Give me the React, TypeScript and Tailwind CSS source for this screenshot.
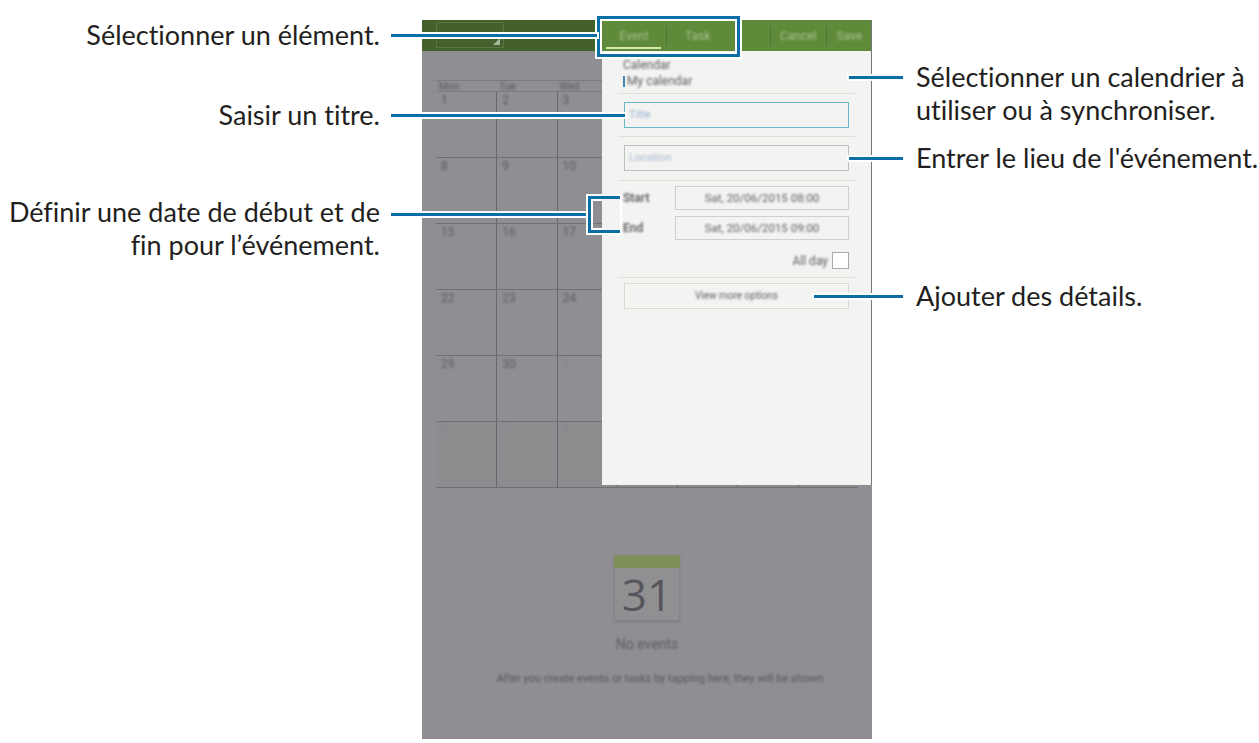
import React from 'react';

const weeks = [
  ['1', '2', '3', '', '', '', ''],
  ['8', '9', '10', '', '', '', ''],
  ['15', '16', '17', '', '', '', ''],
  ['22', '23', '24', '', '', '', ''],
  ['29', '30', '1', '', '', '', ''],
  ['6', '7', '8', '', '', '', ''],
];

// the other day names sit behind the event panel
const days = ['Mon', 'Tue', 'Wed', '', '', '', ''];

const Line = ({ className }: { className: string }) => (
  <div className={`absolute bg-[#0b6ea6] outline-2 outline-white ${className}`} />
);

const CalendarGrid = () => (
  <div className="ml-[14px] mt-[29px] w-[422px]">
    <div className="grid h-[12px] grid-cols-7 border-y border-[#7c7b7f] text-[10px] leading-[11px] text-[#5e5d61]">
      {days.map((d, i) => (
        <div key={i} className="pl-[3px]"><span className="blur-[1.1px] inline-block">{d}</span></div>
      ))}
    </div>
    {weeks.map((week, i) => (
      <div key={i} className={`grid h-[66px] grid-cols-7 border-b border-[#716f74] ${i === 5 ? 'bg-[#8c8d8f]' : ''}`}>
        {week.map((date, j) => (
          <div key={j} className={`pl-[5px] pt-px text-[12px] leading-[14px] ${j > 0 ? 'border-l border-[#68666b]' : ''} ${i >= 4 && (i === 5 || j === 2) ? 'text-[#89888c]' : 'text-[#5f5e62]'}`}>
            <span className="inline-block blur-[1.1px]">{date}</span>
          </div>
        ))}
      </div>
    ))}
  </div>
);

const EventPanel = () => (
  <div className="absolute left-[180px] top-0 flex h-[465px] w-[270px] flex-col border-r border-[#77767a] bg-[#f3f3f1] text-[#5f5e62]">
    <div className="flex h-[31px] shrink-0 items-center bg-[#5f8a3a] text-[12px] leading-[14px] text-[#a4c08a]">
      <div className="relative ml-[4px] flex h-full w-[60px] items-center justify-center pr-[4px]">
        <span className="blur-[1.2px]">Event</span>
        <div className="absolute bottom-[2px] left-0 h-[2px] w-[55px] bg-[#d6ebab]" />
      </div>
      <div className="h-[20px] w-px bg-[#4d7430]" />
      <div className="w-[44px] pl-[18px] blur-[1.2px]">Task</div>
      <div className="ml-[59px] h-[20px] w-px bg-[#4d7430]" />
      <div className="ml-[9px] blur-[1.2px]">Cancel</div>
      <div className="ml-[9px] h-[20px] w-px bg-[#4d7430]" />
      <div className="ml-[10px] blur-[1.2px]">Save</div>
    </div>
    <div className="mx-[16px] h-[43px] shrink-0 border-b border-[#dfdfdc] pl-[5px] pt-[6px] text-[12px] leading-[16px]">
      <div className="blur-[1.2px]">Calendar</div>
      <div className="flex items-center">
        <span className="mr-[2px] h-[11px] w-[2px] bg-[#3f86b3]" />
        <span className="blur-[1.2px]">My calendar</span>
      </div>
    </div>
    <div className="mx-[16px] h-[43px] shrink-0 border-b border-[#dfdfdc] px-[6px] pt-[8px]">
      <div className="flex h-[26px] items-center border border-[#69b6c9] pl-[4px] text-[11px] leading-[14px] text-[#97b2d4]">
        <span className="blur-[1.2px]">Title</span>
      </div>
    </div>
    <div className="mx-[16px] h-[44px] shrink-0 border-b border-[#dfdfdc] px-[6px] pt-[8px]">
      <div className="flex h-[26px] items-center border border-[#c0bfc1] pl-[4px] text-[11px] leading-[14px] text-[#a9bad0]">
        <span className="blur-[1.2px]">Location</span>
      </div>
    </div>
    <div className="mx-[16px] h-[97px] shrink-0 border-b border-[#dfdfdc] pl-[5px] pr-[6px] pt-[5px] text-[12px] leading-[14px]">
      <div className="flex h-[24px] items-center">
        <span className="w-[52px] font-semibold blur-[1.2px]">Start</span>
        <div className="flex h-full flex-1 items-center justify-center border border-[#cfcfcd] text-[11.5px]">
          <span className="blur-[1.2px]">Sat, 20/06/2015 08:00</span>
        </div>
      </div>
      <div className="mt-[6px] flex h-[24px] items-center">
        <span className="w-[52px] font-semibold blur-[1.2px]">End</span>
        <div className="flex h-full flex-1 items-center justify-center border border-[#cfcfcd] text-[11.5px]">
          <span className="blur-[1.2px]">Sat, 20/06/2015 09:00</span>
        </div>
      </div>
      <div className="mt-[12px] flex items-center justify-end">
        <span className="mr-[4px] blur-[1.2px]">All day</span>
        <div className="h-[17px] w-[17px] border border-[#a9a9a9] bg-white" />
      </div>
    </div>
    <div className="mx-[16px] px-[6px] pt-[5px]">
      <div className="flex h-[26px] items-center justify-center border border-[#d8d8d5] text-[10px] leading-[12px]">
        <span className="blur-[1px]">View more options</span>
      </div>
    </div>
  </div>
);

const EmptyState = () => (
  <div className="mt-[67px] flex flex-col items-center">
    <div className="h-[66px] w-[66px] rounded-b-[2px] border-x border-b border-[#858488] bg-[#909093] shadow-sm">
      <div className="-mx-px h-[13px] bg-[#80905a]" />
      <div className="text-center text-[44px] leading-[52px] text-[#56565c] [font-family:'Open_Sans',sans-serif]">31</div>
    </div>
    <div className="mt-[15px] text-[14px] leading-[16px] text-[#5f5e63]">
      <span className="inline-block blur-[1.2px]">No events</span>
    </div>
    <div className="ml-[26px] mt-[20px] whitespace-nowrap text-[11px] leading-[14px] text-[#58575c]">
      <span className="inline-block blur-[1.1px]">After you create events or tasks by tapping here, they will be shown</span>
    </div>
  </div>
);

const App = () => {
  return (
    <div className="relative flex h-[743px] w-[1259px] overflow-hidden bg-white text-[27px] leading-[33px] text-[#231f20] [font-family:Lato,sans-serif] [font-variant-ligatures:none]">
      {/* Left labels */}
      <div className="w-[380px] shrink-0 whitespace-nowrap pt-[18px] text-right">
        <p>Sélectionner un élément.</p>
        <p className="mt-[47px]">Saisir un titre.</p>
        <p className="mt-[64px]">Définir une date de début et de<br />fin pour l’événement.</p>
      </div>

      {/* Device screen */}
      <div className="relative ml-[42px] mt-[20px] h-[719px] w-[450px] shrink-0 bg-[#8f8e92] [font-family:Roboto,sans-serif]">
        <div className="h-[31px] bg-[#44602b] pl-[14px] pt-[2px]">
          <div className="relative h-[26px] w-[68px] border border-[#5b7443]">
            <div className="absolute bottom-[2px] right-[3px] h-0 w-0 border-b-[7px] border-l-[7px] border-b-[#a9b79b] border-l-transparent" />
          </div>
        </div>
        <CalendarGrid />
        <EmptyState />
        <EventPanel />
      </div>

      {/* Right labels */}
      <div className="ml-[44px] shrink-0 whitespace-nowrap pt-[60px]">
        <p>Sélectionner un calendrier à<br />utiliser ou à synchroniser.</p>
        <p className="mt-[15px]">Entrer le lieu de l'événement.</p>
        <p className="mt-[105px]">Ajouter des détails.</p>
      </div>

      {/* Callouts */}
      <div className="absolute left-[597px] top-[16px] h-[41px] w-[143px] border-[3px] border-[#0b6ea6] outline-2 outline-white" />
      <div className="absolute left-[600px] top-[19px] h-[35px] w-[137px] border-2 border-white" />
      <Line className="left-[391px] top-[34px] h-[3px] w-[206px]" />
      <Line className="left-[391px] top-[114px] h-[3px] w-[234px]" />
      <Line className="left-[391px] top-[213px] h-[3px] w-[197px]" />
      <div className="absolute left-[588px] top-[196px] h-[37px] w-[32px] border-y-[3px] border-l-[3px] border-[#0b6ea6] outline-2 outline-white" />
      <div className="absolute left-[591px] top-[199px] h-[31px] w-[11px] border-y-2 border-l-2 border-white" />
      <Line className="left-[849px] top-[76px] h-[3px] w-[54px]" />
      <Line className="left-[849px] top-[157px] h-[3px] w-[54px]" />
      <Line className="left-[814px] top-[295px] h-[3px] w-[89px]" />
    </div>
  );
};

export default App;
